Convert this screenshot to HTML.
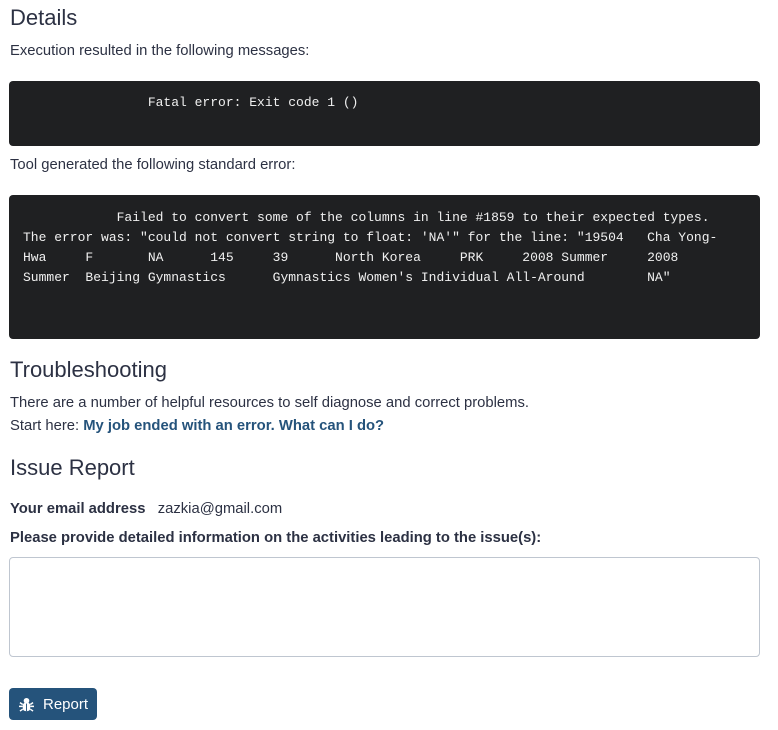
<!DOCTYPE html>
<html><head><style>
body{margin:0;width:778px;height:730px;font-family:"Liberation Sans",sans-serif;font-size:14.8px;color:#2c3143;background:#fff;overflow:hidden}
.a{position:absolute;left:10px;white-space:nowrap}
h2{position:absolute;left:10px;margin:0;font-size:22px;font-weight:normal;line-height:24px}
pre{position:absolute;left:9px;width:751px;margin:0;background:#1f2022;color:#f0f0f0;border-radius:4px;font-family:"Liberation Mono",monospace;font-size:13px;line-height:20px;padding:0;white-space:pre}
b{font-weight:bold}
</style></head><body>
<h2 style="top:6px">Details</h2>
<div class="a" style="top:43px">Execution resulted in the following messages:</div>
<pre style="top:81px;height:65px"><div style="position:absolute;left:14px;top:12px">                Fatal error: Exit code 1 ()</div></pre>
<div class="a" style="top:157px">Tool generated the following standard error:</div>
<pre style="top:195px;height:144px"><div style="position:absolute;left:14px;top:13px">            Failed to convert some of the columns in line #1859 to their expected types.
The error was: "could not convert string to float: 'NA'" for the line: "19504   Cha Yong-
Hwa     F       NA      145     39      North Korea     PRK     2008 Summer     2008
Summer  Beijing Gymnastics      Gymnastics Women's Individual All-Around        NA"</div></pre>
<h2 style="top:358px">Troubleshooting</h2>
<div class="a" style="top:395px">There are a number of helpful resources to self diagnose and correct problems.</div>
<div class="a" style="top:418px">Start here: <b style="color:#25537b">My job ended with an error. What can I do?</b></div>
<h2 style="top:456px">Issue Report</h2>
<div class="a" style="top:501px"><b>Your email address</b>&nbsp;&nbsp; zazkia@gmail.com</div>
<div class="a" style="top:530px"><b>Please provide detailed information on the activities leading to the issue(s):</b></div>
<div style="position:absolute;left:9px;top:557px;width:749px;height:98px;border:1px solid #bfc6d0;border-radius:4px"></div>
<div style="position:absolute;left:9px;top:688px;width:88px;height:32px;background:#25537b;border-radius:4px;color:#fff;font-size:15px;line-height:32px">
<svg style="position:absolute;left:10px;top:9px" width="15" height="15" viewBox="0 0 16 16"><g fill="#fff"><circle cx="8" cy="4" r="3"/><rect x="4" y="6" width="8" height="9" rx="3"/></g><g stroke="#fff" stroke-width="1.6"><path d="M1 6l3 2M15 6l-3 2M0 10h4M16 10h-4M1 15l3-2M15 15l-3-2"/></g><path d="M8 7v8" stroke="#25537b" stroke-width="1"/></svg>
<span style="position:absolute;left:34px;top:1px">Report</span></div>
</body></html>
